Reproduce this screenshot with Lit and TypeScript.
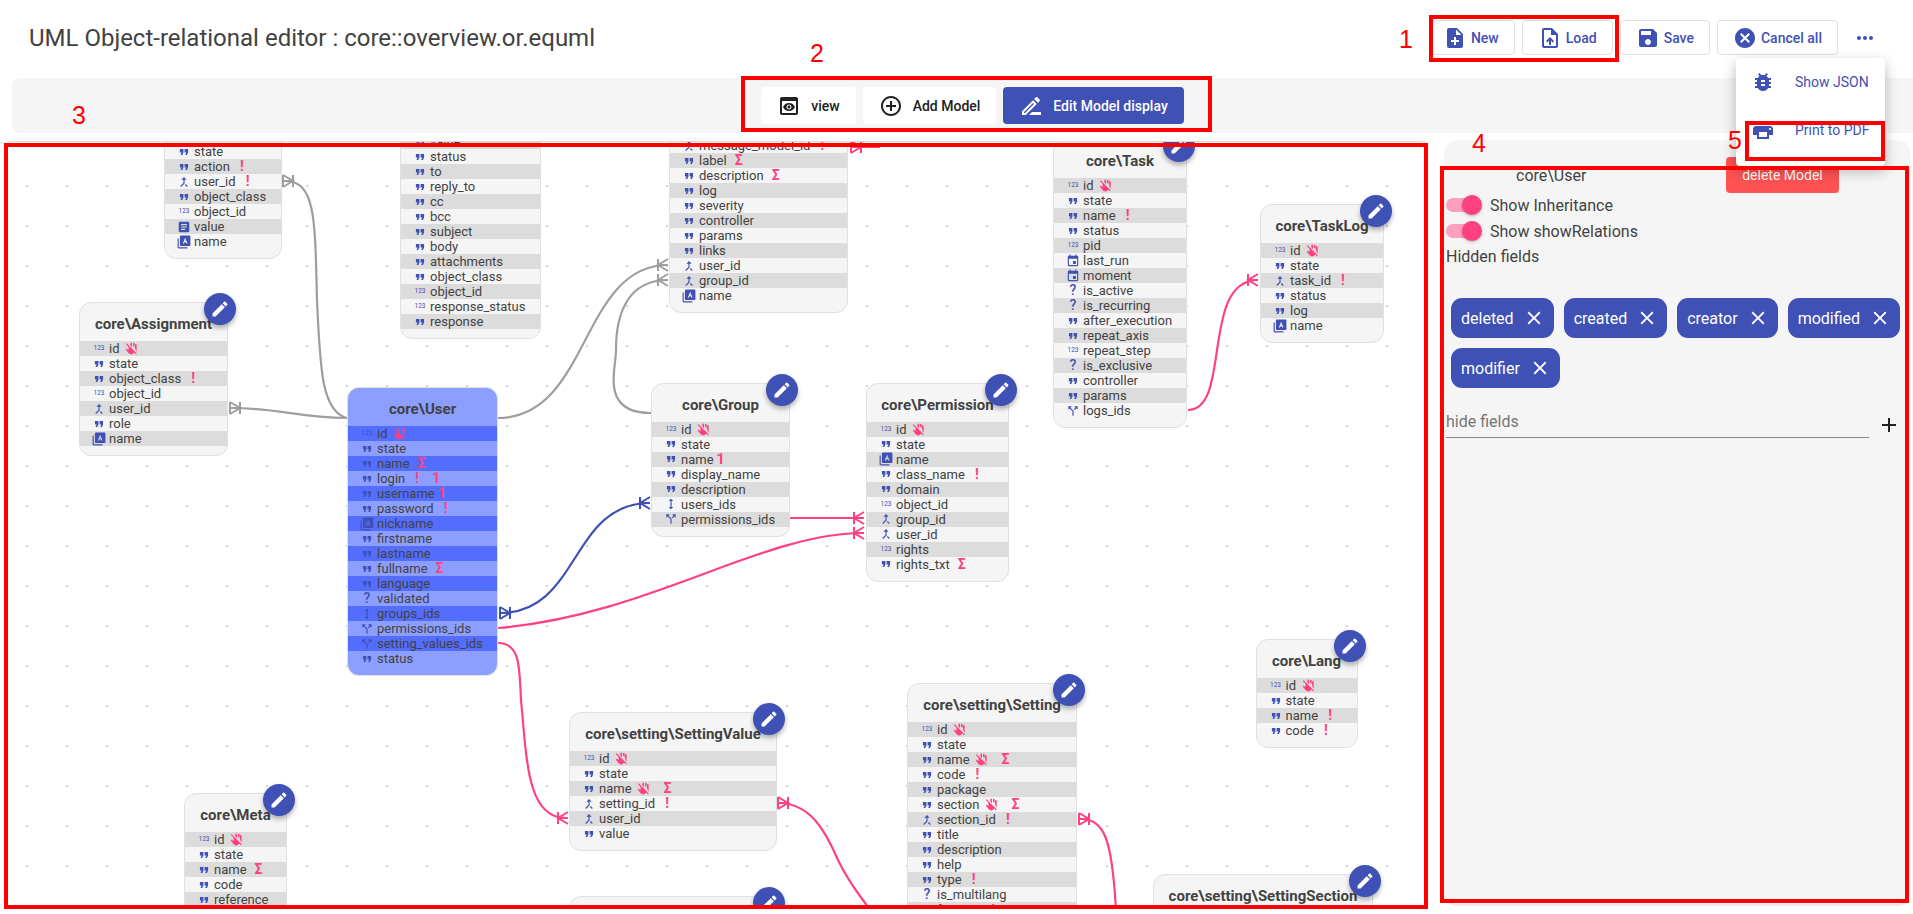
import { LitElement, html, css, svg } from "lit";
import { customElement } from "lit/decorators.js";

const ICONS: Record<string, string> = {
  noteAdd: "M14 2H6c-1.1 0-1.99.9-1.99 2L4 20c0 1.1.89 2 1.99 2H18c1.1 0 2-.9 2-2V8l-6-6zm2 14h-3v3h-2v-3H8v-2h3v-3h2v3h3v2zm-3-7V3.5L18.5 9H13z",
  upload: "M14 2H6c-1.1 0-2 .9-2 2v16c0 1.1.9 2 2 2h12c1.1 0 2-.9 2-2V8l-6-6zM6 20V4h7v5h5v11H6zM8 15.01l1.41 1.41L11 14.84V19h2v-4.16l1.59 1.59L16 15.01 12.01 11z",
  save: "M17 3H5c-1.11 0-2 .9-2 2v14c0 1.1.89 2 2 2h14c1.1 0 2-.9 2-2V7l-4-4zm-5 16c-1.66 0-3-1.34-3-3s1.34-3 3-3 3 1.34 3 3-1.34 3-3 3zm3-10H5V5h10v4z",
  cancel: "M12 2C6.47 2 2 6.47 2 12s4.47 10 10 10 10-4.47 10-10S17.53 2 12 2zm5 13.59L15.59 17 12 13.41 8.41 17 7 15.59 10.59 12 7 8.41 8.41 7 12 10.59 15.59 7 17 8.41 13.41 12 17 15.59z",
  more: "M6 10c-1.1 0-2 .9-2 2s.9 2 2 2 2-.9 2-2-.9-2-2-2zm12 0c-1.1 0-2 .9-2 2s.9 2 2 2 2-.9 2-2-.9-2-2-2zm-6 0c-1.1 0-2 .9-2 2s.9 2 2 2 2-.9 2-2-.9-2-2-2z",
  bug: "M20 8h-2.81c-.45-.78-1.07-1.45-1.82-1.96L17 4.41 15.59 3l-2.17 2.17C12.96 5.06 12.49 5 12 5c-.49 0-.96.06-1.41.17L8.41 3 7 4.41l1.62 1.63C7.88 6.55 7.26 7.22 6.81 8H4v2h2.09c-.05.33-.09.66-.09 1v1H4v2h2v1c0 .34.04.67.09 1H4v2h2.81c1.04 1.79 2.97 3 5.19 3s4.15-1.21 5.19-3H20v-2h-2.09c.05-.33.09-.66.09-1v-1h2v-2h-2v-1c0-.34-.04-.67-.09-1H20V8zm-6 8h-4v-2h4v2zm0-4h-4v-2h4v2z",
  print: "M19 8H5c-1.66 0-3 1.34-3 3v6h4v4h12v-4h4v-6c0-1.66-1.34-3-3-3zm-3 11H8v-5h8v5zm3-7c-.55 0-1-.45-1-1s.45-1 1-1 1 .45 1 1-.45 1-1 1zm-1-9H6v4h12V3z",
  preview: "M19 3H5c-1.11 0-2 .9-2 2v14c0 1.1.89 2 2 2h14c1.1 0 2-.9 2-2V5c0-1.1-.89-2-2-2zm0 16H5V7h14v12zm-5.5-6c0 .83-.67 1.5-1.5 1.5s-1.5-.67-1.5-1.5.67-1.5 1.5-1.5 1.5.67 1.5 1.5zM12 9c-2.73 0-5.06 1.66-6 4 .94 2.34 3.27 4 6 4s5.06-1.66 6-4c-.94-2.34-3.27-4-6-4zm0 6.5c-1.38 0-2.5-1.12-2.5-2.5s1.12-2.5 2.5-2.5 2.5 1.12 2.5 2.5-1.12 2.5-2.5 2.5z",
  addCircle: "M13 7h-2v4H7v2h4v4h2v-4h4v-2h-4V7zm-1-5C6.48 2 2 6.48 2 12s4.48 10 10 10 10-4.48 10-10S17.52 2 12 2zm0 18c-4.41 0-8-3.59-8-8s3.59-8 8-8 8 3.59 8 8-3.59 8-8 8z",
  draw: "M14.06 9.02l.92.92L5.92 19H5v-.92l9.06-9.06M17.66 3c-.25 0-.51.1-.7.29l-1.83 1.83 3.75 3.75 1.83-1.83c.39-.39.39-1.02 0-1.41l-2.34-2.34c-.2-.2-.45-.29-.71-.29zm-3.6 3.19L3 17.25V21h3.75L17.81 9.94l-3.75-3.75zM13 18h9v3h-12z",
  edit: "M3 17.25V21h3.75L17.81 9.94l-3.75-3.75L3 17.25zM20.71 7.04c.39-.39.39-1.02 0-1.41l-2.34-2.34c-.39-.39-1.02-.39-1.41 0l-1.83 1.83 3.75 3.75 1.83-1.83z",
  quote: "M6 17h3l2-4V7H5v6h3zm8 0h3l2-4V7h-6v6h3z",
  merge: "M17 20.41L18.41 19 15 15.59 13.59 17 17 20.41zM7.5 8H11v5.59L5.59 19 7 20.41l6-6V8h3.5L12 3.5 7.5 8z",
  split: "M14 4l2.29 2.29-2.88 2.88 1.42 1.42 2.88-2.88L20 10V4zm-4 0H4v6l2.29-2.29 4.71 4.7V20h2v-8.41l-5.29-5.3z",
  height: "M13 6.99h3L12 3 8 6.99h3v10.02H8L12 21l4-3.99h-3z",
  article: "M19 3H5c-1.1 0-2 .9-2 2v14c0 1.1.9 2 2 2h14c1.1 0 2-.9 2-2V5c0-1.1-.9-2-2-2zm-5 14H7v-2h7v2zm3-4H7v-2h10v2zm0-4H7V7h10v2z",
  event: "M17 12h-5v5h5v-5zM16 1v2H8V1H6v2H5c-1.11 0-1.99.9-1.99 2L3 19c0 1.1.89 2 2 2h14c1.1 0 2-.9 2-2V5c0-1.1-.9-2-2-2h-1V1h-2zm3 18H5V8h14v11z",
  lib: "M3 6H1v15c0 1.1.9 2 2 2h15v-2H3V6zM21 1H7c-1.1 0-2 .9-2 2v14c0 1.1.9 2 2 2h14c1.1 0 2-.9 2-2V3c0-1.1-.9-2-2-2zm-7 3.5l4 10h-2l-.8-2h-2.4l-.8 2h-2zm0 3.2L13.3 10h1.4z",
  hand: "M13 9.5l-3-3V2.25a1.5 1.5 0 013 0zM18.5 11.5V5a1.5 1.5 0 013 0v11a6 6 0 01-.4 2.2zM17.75 9.3l-3-3V3a1.5 1.5 0 013 0zM1.4 3.9L3 2.2 21.8 21l-1.7 1.7-3.2-3.2A7 7 0 0112 23c-3 0-5-1.2-6.4-3.4L1.8 14.4c-.6-1 .7-2.2 1.7-1.5l3 1.8V8.9z",
  close: "M19 6.41L17.59 5 12 10.59 6.41 5 5 6.41 10.59 12 5 17.59 6.41 19 12 13.41 17.59 19 19 17.59 13.41 12z",
  plus: "M19 13h-6v6h-2v-6H5v-2h6V5h2v6h6v2z",
};

const icon = (name: string, size = 24) => html`<svg class="ico" width=${size} height=${size} viewBox="0 0 24 24" fill="currentColor" fill-rule="evenodd"><path d=${ICONS[name]}></path></svg>`;

// field syntax: "name:type:marks", type q=quote n=123 m=merge s=split h=height l=lib a=article e=event b=bool
// marks: k=no touch, r=required, g=sigma, u=unique
type Model = { title?: string; x: number; y: number; w: number; h?: number; rows: string[]; start?: number; badge?: boolean; active?: boolean; firstDark?: boolean };

const MODELS: Model[] = [
  { x: 164, y: 105, w: 118, start: 144, firstDark: false, rows: ["state:q", "action:q:r", "user_id:m:r", "object_class:q", "object_id:n", "value:a", "name:l"], h: 154, badge: false },
  { x: 400, y: 80, w: 141, start: 134, firstDark: true, rows: ["value:q", "status:q", "to:q", "reply_to:q", "cc:q", "bcc:q", "subject:q", "body:q", "attachments:q", "object_class:q", "object_id:n", "response_status:n", "response:q"], h: 259, badge: false },
  { x: 669, y: 99, w: 179, start: 138, firstDark: false, rows: ["message_model_id:m:r", "label:q:g", "description:q:g", "log:q", "severity:q", "controller:q", "params:q", "links:q", "user_id:m", "group_id:m", "name:l"], h: 214, badge: false },
  { title: "core\\Assignment", x: 79, y: 302, w: 149, rows: ["id:n:k", "state:q", "object_class:q:r", "object_id:n", "user_id:m", "role:q", "name:l"] },
  { title: "core\\User", x: 347, y: 387, w: 151, active: true, rows: ["id:n:k", "state:q", "name:q:g", "login:q:ru", "username:q:u", "password:q:r", "nickname:l", "firstname:q", "lastname:q", "fullname:q:g", "language:q", "validated:b", "groups_ids:h", "permissions_ids:s", "setting_values_ids:s", "status:q"], badge: false },
  { title: "core\\Group", x: 651, y: 382.5, w: 139, rows: ["id:n:k", "state:q", "name:q:u", "display_name:q", "description:q", "users_ids:h", "permissions_ids:s"] },
  { title: "core\\Permission", x: 866, y: 382.5, w: 143, rows: ["id:n:k", "state:q", "name:l", "class_name:q:r", "domain:q", "object_id:n", "group_id:m", "user_id:m", "rights:n", "rights_txt:q:g"] },
  { title: "core\\Task", x: 1053, y: 139, w: 134, rows: ["id:n:k", "state:q", "name:q:r", "status:q", "pid:n", "last_run:e", "moment:e", "is_active:b", "is_recurring:b", "after_execution:q", "repeat_axis:q", "repeat_step:n", "is_exclusive:b", "controller:q", "params:q", "logs_ids:s"] },
  { title: "core\\TaskLog", x: 1260, y: 204, w: 124, rows: ["id:n:k", "state:q", "task_id:m:r", "status:q", "log:q", "name:l"] },
  { title: "core\\Lang", x: 1255.5, y: 639, w: 102, rows: ["id:n:k", "state:q", "name:q:r", "code:q:r"] },
  { title: "core\\setting\\Setting", x: 907, y: 683, w: 170, rows: ["id:n:k", "state:q", "name:q:kg", "code:q:r", "package:q", "section:q:kg", "section_id:m:r", "title:q", "description:q", "help:q", "type:q:r", "is_multilang:b", "formatted:q"] },
  { title: "core\\setting\\SettingValue", x: 569, y: 712, w: 208, rows: ["id:n:k", "state:q", "name:q:kg", "setting_id:m:r", "user_id:m", "value:q"] },
  { title: "core\\Meta", x: 184, y: 793, w: 103, rows: ["id:n:k", "state:q", "name:q:g", "code:q", "reference:q"] },
  { title: "core\\setting\\SettingSection", x: 1153, y: 874, w: 220, rows: ["id:n:k"] },
  { title: " ", x: 569, y: 896, w: 208, rows: ["id:n:k"] },
];

const GRAY = "#9e9e9e";
const BLUE = "#3f51b5";
const PINK = "#ff4081";

const LINKS = [
  { c: GRAY, d: "M347 418C322 412 320 370 317 300C315 220 316 181 285 181" },
  { c: GRAY, d: "M347 418C298 418 280 408 232 408" },
  { c: GRAY, d: "M498 418C590 418 580 265 668 265" },
  { c: GRAY, d: "M651 413C600 413 616 370 616 350C616 310 630 280 668 280" },
  { c: BLUE, d: "M500 613C580 613 570 503 650 503" },
  { c: PINK, d: "M498 628C650 615 760 533 864 533" },
  { c: PINK, d: "M790 518L864 518" },
  { c: PINK, d: "M498 643C525 643 518 680 522 710C527 770 530 818 566 818" },
  { c: PINK, d: "M1188 410C1232 410 1200 280 1258 280" },
  { c: PINK, d: "M1080 819C1105 819 1112 840 1116 910" },
  { c: PINK, d: "M778 803C810 803 825 830 838 860C850 885 860 895 870 910" },
  { c: PINK, d: "M851 147L880 147" },
];

// crow's foot: x is the edge nearest the node, dir +1 = drawn to the right
const FEET = [
  { x: 283, y: 181, dir: 1, c: GRAY },
  { x: 230, y: 408, dir: 1, c: GRAY },
  { x: 668, y: 265, dir: -1, c: GRAY },
  { x: 668, y: 280, dir: -1, c: GRAY },
  { x: 500, y: 613, dir: 1, c: BLUE },
  { x: 650, y: 503, dir: -1, c: BLUE },
  { x: 864, y: 518, dir: -1, c: PINK },
  { x: 864, y: 533, dir: -1, c: PINK },
  { x: 568, y: 818, dir: -1, c: PINK },
  { x: 1258, y: 280, dir: -1, c: PINK },
  { x: 1079, y: 819, dir: 1, c: PINK },
  { x: 778, y: 803, dir: 1, c: PINK },
  { x: 851, y: 147, dir: 1, c: PINK },
];

const MARKS = [
  { x: 1429, y: 15, w: 190, h: 47 },
  { x: 741, y: 76, w: 471, h: 56 },
  { x: 4, y: 143, w: 1424, h: 766 },
  { x: 1440, y: 166, w: 469, h: 737 },
  { x: 1745, y: 121, w: 140, h: 40 },
];
const DIGITS = [
  { t: "1", x: 1406, y: 39 },
  { t: "2", x: 817, y: 53 },
  { t: "3", x: 79, y: 115 },
  { t: "4", x: 1479, y: 143 },
  { t: "5", x: 1735, y: 140 },
];

// page position of the canvas padding box
const OX = 6;
const OY = 142;

@customElement("model-node")
export class ModelNode extends LitElement {
  static properties = { model: { attribute: false } };
  declare model: Model;

  static styles = css`
    :host {
      display: contents;
    }
    .node {
      position: absolute;
      box-sizing: border-box;
      background: #f5f5f5;
      border: 1px solid #e0e0e0;
      border-radius: 12px;
      padding-bottom: 9px;
      color: #424242;
      font-family: Roboto, sans-serif;
    }
    .node.active {
      background: #8c9eff;
    }
    h3 {
      margin: 0;
      height: 38px;
      font-size: 15px;
      font-weight: 700;
      line-height: 42px;
      text-align: center;
      white-space: nowrap;
    }
    .row {
      display: flex;
      align-items: center;
      height: 15px;
      font-size: 13px;
      line-height: 15px;
      white-space: nowrap;
    }
    .row.dark {
      background: #dcdcdc;
    }
    .active .row.dark {
      background: #536dfe;
    }
    .type {
      flex: none;
      width: 28px;
      margin-right: 1px;
      padding-left: 10px;
      box-sizing: border-box;
      display: flex;
      justify-content: center;
      align-items: center;
      color: #3f51b5;
    }
    .num {
      font-size: 6.5px;
      font-weight: 400;
    }
    .bool {
      font-size: 14px;
      font-weight: 500;
    }
    .mark {
      flex: none;
      width: 14px;
      margin-left: 5px;
      display: flex;
      justify-content: center;
      align-items: center;
      color: #ff4081;
      font-size: 14px;
      font-weight: 700;
    }
    .mark + .mark {
      margin-left: 10px;
    }
    .mark.one {
      margin-left: 0;
      font-size: 15px;
    }
    .mark + .mark.one {
      margin-left: 5px;
    }
    .badge {
      position: absolute;
      top: -10px;
      right: -9px;
      width: 32px;
      height: 32px;
      border-radius: 50%;
      background: #3f51b5;
      color: #fff;
      display: flex;
      align-items: center;
      justify-content: center;
      box-shadow: 0 3px 5px rgba(0, 0, 0, 0.3);
    }
    .ico {
      display: block;
      flex: none;
    }
  `;

  typeIcon(t: string) {
    if (t === "n") return html`<span class="num">123</span>`;
    if (t === "b") return html`<span class="bool">?</span>`;
    const map: Record<string, string> = { q: "quote", m: "merge", s: "split", h: "height", l: "lib", a: "article", e: "event" };
    return icon(map[t], 14);
  }

  mark(m: string) {
    if (m === "k") return html`<span class="mark">${icon("hand", 13)}</span>`;
    if (m === "r") return html`<span class="mark">!</span>`;
    if (m === "g") return html`<span class="mark">Σ</span>`;
    return html`<span class="mark one">1</span>`;
  }

  render() {
    const m = this.model;
    const start = m.start ?? m.y + 39;
    const rows = m.rows.map((r) => r.split(":"));
    const box = `left:${m.x - OX}px;top:${m.y - OY}px;width:${m.w}px;${m.h ? `height:${m.h}px;` : ""}`;
    return html`
      <div class="node ${m.active ? "active" : ""}" style=${box}>
        ${m.title
          ? html`<h3>${m.title}</h3>`
          : html`<div style="height:${start - m.y - 1}px"></div>`}
        ${rows.map(
          ([name, type, marks], i) => html`
            <div class="row ${(i % 2 === 0) === (m.title ? true : !!m.firstDark) ? "dark" : ""}">
              <span class="type">${this.typeIcon(type)}</span>
              <span>${name}</span>
              ${(marks ?? "").split("").map((k) => this.mark(k))}
            </div>
          `
        )}
        ${m.badge === false ? "" : html`<div class="badge">${icon("edit", 20)}</div>`}
      </div>
    `;
  }
}

@customElement("app-root")
export class AppRoot extends LitElement {
  static styles = css`
    :host {
      display: block;
      position: relative;
      height: 914px;
      overflow: hidden;
      background: #fff;
      font-family: Roboto, sans-serif;
      color: #424242;
    }
    .ico {
      display: block;
      flex: none;
    }

    .header {
      display: flex;
      align-items: center;
      height: 78px;
      padding: 0 28.5px 3px 29px;
      box-sizing: border-box;
    }
    .title {
      margin: 0;
      font-size: 24px;
      font-weight: 400;
      color: #424242;
      white-space: nowrap;
    }
    .actions {
      margin-left: auto;
      display: flex;
      align-items: center;
      gap: 7.5px;
    }
    .act {
      display: flex;
      align-items: center;
      gap: 3.5px;
      height: 35px;
      padding: 0 15px;
      box-sizing: border-box;
      background: #fff;
      border: 1px solid #e0e0e0;
      border-radius: 4px;
      color: #3f51b5;
      font: 500 14px Roboto, sans-serif;
    }
    .act:first-child {
      padding-left: 11px;
    }
    .dots {
      color: #3f51b5;
      width: 39px;
      display: flex;
      justify-content: center;
    }

    .toolbar {
      display: flex;
      justify-content: center;
      align-items: center;
      gap: 7px;
      height: 55px;
      margin: 0 -20px 0 12px;
      background: #f5f5f5;
      border-radius: 8px;
    }
    .tool {
      display: flex;
      align-items: center;
      gap: 10px;
      height: 37px;
      padding: 0 16px;
      box-sizing: border-box;
      background: #fff;
      border: 0;
      border-radius: 4px;
      color: #212121;
      font: 500 14px Roboto, sans-serif;
    }
    .tool.on {
      background: #3f51b5;
      color: #fff;
    }

    .main {
      display: flex;
      align-items: flex-start;
      gap: 18px;
      margin-top: 8px;
      padding-left: 5px;
    }
    .canvas {
      position: relative;
      flex: none;
      width: 1423px;
      height: 767px;
      box-sizing: border-box;
      overflow: hidden;
      border: 1px solid #d6d6d6;
      border-radius: 6px;
      background-image: radial-gradient(circle, #d2d5dc 1.4px, transparent 1.6px);
      background-size: 40px 40px;
      background-position: 1px 24px;
    }
    .links {
      position: absolute;
      left: 0;
      top: 0;
    }

    .panel {
      flex: none;
      width: 463px;
      height: 763px;
      box-sizing: border-box;
      padding: 16px 0 0;
      background: #f5f5f5;
      border-radius: 10px;
      box-shadow: 0 1px 3px rgba(0, 0, 0, 0.15);
      font-size: 16px;
      color: #424242;
    }
    .panel-head {
      display: flex;
      align-items: center;
      height: 36px;
      margin-bottom: -1px;
      padding-left: 70px;
    }
    .panel-head span {
      width: 210px;
    }
    .delete {
      width: 113px;
      height: 36px;
      border: 0;
      border-radius: 4px;
      background: #ff5252;
      color: #fff;
      font: 400 14px Roboto, sans-serif;
    }
    .toggle-row {
      display: flex;
      align-items: center;
      gap: 8px;
      height: 26px;
    }
    .toggle {
      position: relative;
      width: 33px;
      height: 14px;
      margin-right: 3px;
      border-radius: 7px;
      background: #ff9fc0;
    }
    .toggle::after {
      content: "";
      position: absolute;
      right: -3px;
      top: -3px;
      width: 20px;
      height: 20px;
      border-radius: 50%;
      background: #ff4081;
      box-shadow: 0 1px 3px rgba(0, 0, 0, 0.3);
    }
    .hidden-label {
      height: 26px;
      line-height: 26px;
    }
    .chips {
      display: flex;
      flex-wrap: wrap;
      gap: 10px;
      margin: 28px 0 0 5px;
    }
    .chip {
      display: flex;
      align-items: center;
      gap: 9px;
      height: 40px;
      padding: 0 9px 0 10px;
      border-radius: 11px;
      background: #3f51b5;
      color: #fff;
    }
    .add-row {
      display: flex;
      align-items: center;
      margin-top: 23px;
    }
    .field {
      width: 423px;
      height: 26px;
      line-height: 22px;
      color: #757575;
      border-bottom: 1px solid #8a8a8a;
    }
    .add-row .ico {
      margin-left: 8px;
      color: #212121;
    }

    .menu {
      position: absolute;
      left: 1735.5px;
      top: 58px;
      width: 149.5px;
      height: 108px;
      background: #fff;
      border-radius: 4px;
      box-shadow: 0 5px 14px rgba(0, 0, 0, 0.28);
      color: #3f51b5;
      font-size: 14px;
    }
    .menu-item {
      display: flex;
      align-items: center;
      gap: 20px;
      height: 48px;
      padding-left: 15.5px;
    }

    .note {
      position: absolute;
      box-sizing: border-box;
      border: 4px solid #f00;
      pointer-events: none;
    }
    .digit {
      position: absolute;
      transform: translate(-50%, -50%);
      color: #f00;
      font: 25px "Liberation Sans", sans-serif;
    }
  `;

  foot(f: { x: number; y: number; dir: number; c: string }) {
    const far = f.x + f.dir * 10;
    const base = f.dir > 0 ? `M${f.x} ${f.y - 6}V${f.y + 6}` : "";
    return svg`<path d="${base}M${f.x} ${f.y - 6}L${far} ${f.y}L${f.x} ${f.y + 6}M${f.x} ${f.y}H${far}M${far} ${f.y - 6}V${f.y + 6}" fill="none" stroke=${f.c} stroke-width="2"></path>`;
  }

  render() {
    const chips = ["deleted", "created", "creator", "modified", "modifier"];
    return html`
      <header class="header">
        <h1 class="title">UML Object-relational editor : core::overview.or.equml</h1>
        <div class="actions">
          <button class="act">${icon("noteAdd")}New</button>
          <button class="act">${icon("upload")}Load</button>
          <button class="act">${icon("save")}Save</button>
          <button class="act">${icon("cancel")}Cancel all</button>
          <div class="dots">${icon("more")}</div>
        </div>
      </header>

      <nav class="toolbar">
        <button class="tool">${icon("preview")}view</button>
        <button class="tool">${icon("addCircle")}Add Model</button>
        <button class="tool on">${icon("draw")}Edit Model display</button>
      </nav>

      <div class="main">
        <section class="canvas">
          <svg class="links" width="1421" height="765" viewBox="${OX} ${OY} 1421 765">
            ${LINKS.map((l) => svg`<path d=${l.d} fill="none" stroke=${l.c} stroke-width="2.2"></path>`)}
            ${FEET.map((f) => this.foot(f))}
          </svg>
          ${MODELS.map((m) => html`<model-node .model=${m}></model-node>`)}
        </section>

        <aside class="panel">
          <div class="panel-head">
            <span>core\\User</span>
            <button class="delete">delete Model</button>
          </div>
          <div class="toggle-row"><span class="toggle"></span>Show Inheritance</div>
          <div class="toggle-row"><span class="toggle"></span>Show showRelations</div>
          <div class="hidden-label">Hidden fields</div>
          <div class="chips">
            ${chips.map((c) => html`<div class="chip">${c}${icon("close", 22)}</div>`)}
          </div>
          <div class="add-row">
            <div class="field">hide fields</div>
            ${icon("plus", 24)}
          </div>
        </aside>
      </div>

      <div class="menu">
        <div class="menu-item">${icon("bug")}Show JSON</div>
        <div class="menu-item">${icon("print")}Print to PDF</div>
      </div>

      ${MARKS.map((r) => html`<div class="note" style="left:${r.x}px;top:${r.y}px;width:${r.w}px;height:${r.h}px"></div>`)}
      ${DIGITS.map((d) => html`<div class="digit" style="left:${d.x}px;top:${d.y}px">${d.t}</div>`)}
    `;
  }
}
